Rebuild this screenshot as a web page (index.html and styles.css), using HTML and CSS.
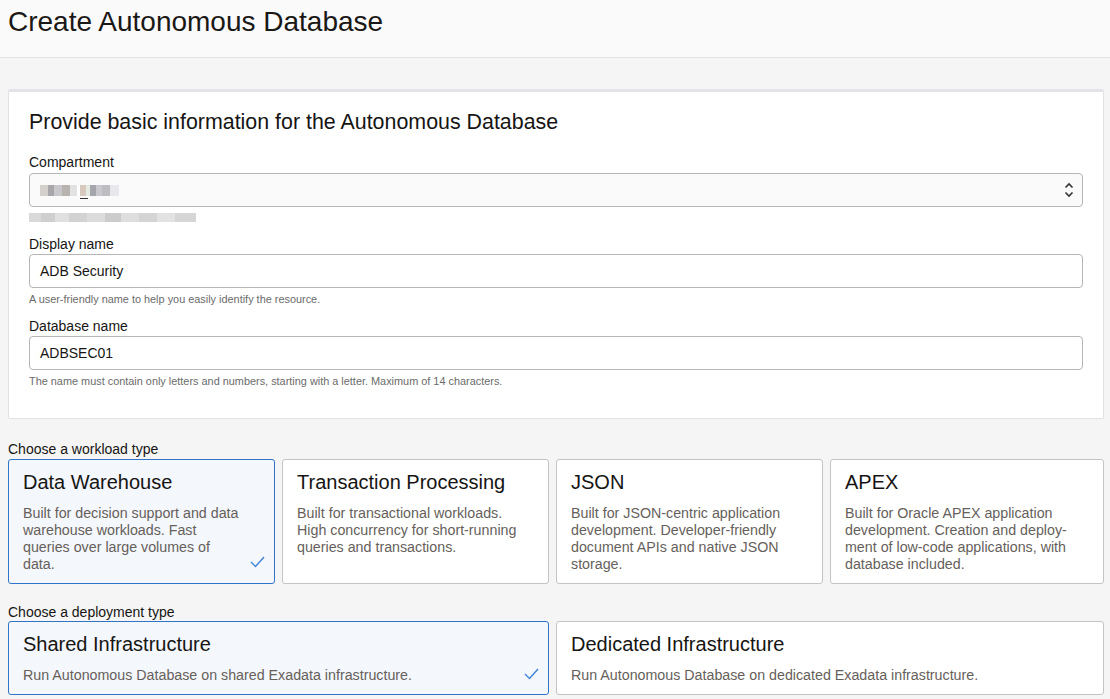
FILE: index.html
```html
<!DOCTYPE html>
<html lang="en">
<head>
<meta charset="utf-8">
<title>Create Autonomous Database</title>
<link rel="stylesheet" href="styles.css">
</head>
<body>
<header class="page-header">
  <h1 class="page-title">Create Autonomous Database</h1>
</header>
<main class="content">
  <section class="panel">
    <h2 class="panel-title">Provide basic information for the Autonomous Database</h2>
    <div class="field field-first">
      <label class="field-label">Compartment</label>
      <div class="select">
        <span class="blur blur-value"><span class="blur-underscore"></span></span>
        <svg class="select-arrows" width="10" height="16" viewBox="0 0 10 16" aria-hidden="true">
          <path d="M1.5 5.5 L5 2 L8.5 5.5" fill="none" stroke="#333" stroke-width="1.6"/>
          <path d="M1.5 10.5 L5 14 L8.5 10.5" fill="none" stroke="#333" stroke-width="1.6"/>
        </svg>
      </div>
      <div class="blur-help"><span class="blur blur-path"></span></div>
    </div>
    <div class="field">
      <label class="field-label">Display name</label>
      <div class="input">ADB Security</div>
      <p class="help">A user-friendly name to help you easily identify the resource.</p>
    </div>
    <div class="field">
      <label class="field-label">Database name</label>
      <div class="input">ADBSEC01</div>
      <p class="help">The name must contain only letters and numbers, starting with a letter. Maximum of 14 characters.</p>
    </div>
  </section>

  <p class="group-label group-label-first">Choose a workload type</p>
  <div class="card-grid">
    <div class="card selected">
      <h3 class="card-title">Data Warehouse</h3>
      <p class="card-desc">Built for decision support and data warehouse workloads. Fast queries over large volumes of data.</p>
      <svg class="check" width="15" height="12" viewBox="0 0 15 12" aria-hidden="true"><path d="M1 6 L5.5 10.5 L14 1" fill="none" stroke="#3f82d6" stroke-width="1.4"/></svg>
    </div>
    <div class="card">
      <h3 class="card-title">Transaction Processing</h3>
      <p class="card-desc">Built for transactional workloads. High concurrency for short-running queries and transactions.</p>
    </div>
    <div class="card">
      <h3 class="card-title">JSON</h3>
      <p class="card-desc">Built for JSON-centric application development. Developer-friendly document APIs and native JSON storage.</p>
    </div>
    <div class="card">
      <h3 class="card-title">APEX</h3>
      <p class="card-desc">Built for Oracle APEX application development. Creation and deploy-ment of low-code applications, with database included.</p>
    </div>
  </div>

  <p class="group-label group-label-second">Choose a deployment type</p>
  <div class="card-grid">
    <div class="card wide selected">
      <h3 class="card-title">Shared Infrastructure</h3>
      <p class="card-desc">Run Autonomous Database on shared Exadata infrastructure.</p>
      <svg class="check" width="15" height="12" viewBox="0 0 15 12" aria-hidden="true"><path d="M1 6 L5.5 10.5 L14 1" fill="none" stroke="#3f82d6" stroke-width="1.4"/></svg>
    </div>
    <div class="card wide">
      <h3 class="card-title">Dedicated Infrastructure</h3>
      <p class="card-desc">Run Autonomous Database on dedicated Exadata infrastructure.</p>
    </div>
  </div>
</main>
</body>
</html>
```

FILE: styles.css
```css
* { box-sizing: border-box; }

html, body {
  margin: 0;
  padding: 0;
}

body {
  background: #f5f5f5;
  font-family: "Liberation Sans", Arial, sans-serif;
  color: #161513;
  width: 1110px;
  height: 699px;
  overflow: hidden;
}

.page-header {
  height: 58px;
  background: #fafafa;
  border-bottom: 1px solid #e3e3e3;
  padding: 6px 8px 0;
}

.page-title {
  margin: 0;
  font-size: 28px;
  line-height: 32px;
  font-weight: normal;
  color: #1a1816;
}

.content {
  padding: 31px 6px 0 8px;
}

.panel {
  background: #ffffff;
  border: 1px solid #e2e2e4;
  border-top: 3px solid #e4e4e8;
  border-radius: 2px;
  padding: 18px 20px 30px;
}

.panel-title {
  margin: 0;
  font-size: 21.4px;
  line-height: 25px;
  font-weight: normal;
}

.field { margin-top: 12px; }
.field-first { margin-top: 19px; }

.field-label {
  display: block;
  font-size: 14px;
  line-height: 17px;
  margin-bottom: 1px;
}

.field-first .field-label { margin-bottom: 2px; }

.select, .input {
  height: 34px;
  border: 1px solid #b6b6b8;
  border-radius: 4px;
  display: flex;
  align-items: center;
  padding: 0 10px;
  font-size: 14px;
  color: #161513;
}

.select {
  background: #fafafa;
  justify-content: space-between;
}

.input { background: #ffffff; }

.select-arrows { margin-right: -2px; }

.blur {
  display: block;
  position: relative;
}

.blur-value {
  width: 79px;
  height: 11px;
  background: linear-gradient(90deg,
    #d4d0cc 0 8px, #a9a6aa 8px 14px, #c7c7cc 14px 22px, #b8b3ae 22px 30px,
    #e2e2e2 30px 37px, #ffffff 37px 40px, #d8c9bf 40px 46px, #e3ebe3 46px 50px,
    #a5a5ae 50px 56px, #c8c8ce 56px 62px, #bcbcc2 62px 70px, #e8e8ec 70px 79px);
}

.blur-underscore {
  position: absolute;
  left: 40px;
  bottom: -3px;
  width: 8px;
  height: 1px;
  background: #333;
}

.blur-help {
  margin-top: 3px;
  height: 14px;
  padding-top: 3px;
}

.blur-path {
  width: 167px;
  height: 9px;
  background: linear-gradient(90deg,
    #d9d9d9 0 12px, #cfcfcf 12px 26px, #e0e0e0 26px 40px, #d2d2d2 40px 58px,
    #dcdcdc 58px 76px, #cccccc 76px 92px, #dedede 92px 110px, #d4d4d4 110px 128px,
    #e2e2e2 128px 146px, #d6d6d6 146px 167px);
}

.help {
  margin: 4px 0 0;
  font-size: 10.9px;
  line-height: 14px;
  color: #6b6b6b;
}

.group-label {
  margin: 0;
  font-size: 14px;
  line-height: 17px;
  color: #161513;
}

.group-label-first { margin-top: 22px; margin-bottom: 1px; }
.group-label-second { margin-top: 20px; margin-bottom: 0; }

.card-grid {
  display: grid;
  grid-template-columns: 267px 267px 267px 1fr;
  column-gap: 7px;
}

.card {
  position: relative;
  background: #ffffff;
  border: 1px solid #c3c3c8;
  border-radius: 3px;
  padding: 10px 14px 10px;
}

.card.wide { grid-column: span 2; }

.card.selected {
  background: #f4f7fc;
  border-color: #2f74c8;
}

.card-title {
  margin: 0;
  font-size: 20px;
  line-height: 24px;
  font-weight: normal;
  color: #161513;
}

.card-desc {
  margin: 11px 0 0;
  font-size: 14.25px;
  line-height: 17px;
  color: #665f5b;
  padding-right: 16px;
}

.check {
  position: absolute;
  right: 9px;
  bottom: 15px;
}

.card.wide .check { bottom: 14px; }
```
